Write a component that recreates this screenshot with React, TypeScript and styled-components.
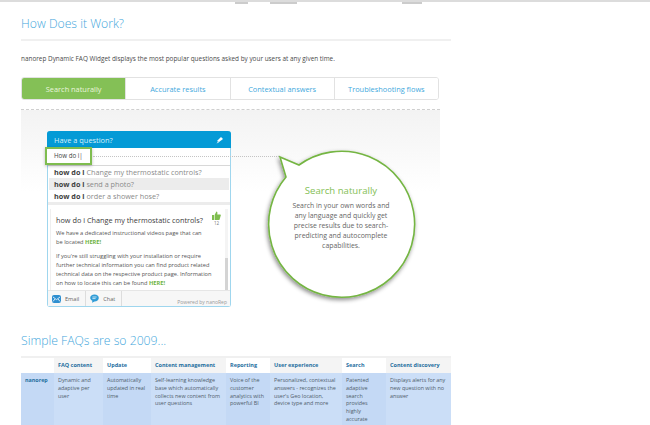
import React from "react";
import styled, { createGlobalStyle } from "styled-components";

const GlobalStyle = createGlobalStyle`
  html, body {
    margin: 0;
    padding: 0;
    background: #ffffff;
  }
  body {
    font-family: "Open Sans", "Liberation Sans", sans-serif;
  }
`;

const Page = styled.div`
  width: 650px;
  height: 425px;
  overflow: hidden;
  display: flex;
  flex-direction: column;
`;

const TopStrip = styled.div`
  height: 2px;
  background: #dcdcdc;
  flex-shrink: 0;
`;

const CutOffRow = styled.div`
  height: 2px;
  display: flex;
  flex-shrink: 0;
  padding-left: 235px;
`;

const CutOffMark = styled.span<{ $w: number; $gap: number }>`
  width: ${({ $w }) => $w}px;
  margin-right: ${({ $gap }) => $gap}px;
  height: 2px;
  background: #cccccc;
`;

const Column = styled.div`
  width: 430px;
  margin-left: 21px;
  display: flex;
  flex-direction: column;
`;

const Heading = styled.h2`
  margin: 8px 0 0;
  height: 23px;
  font-size: 12.2px;
  line-height: 23px;
  font-weight: 300;
  color: #44a7dc;
`;

const Rule = styled.div`
  height: 2px;
  margin-top: 4px;
  background: #f0f0f0;
`;

const Intro = styled.p`
  margin: 12px 0 0;
  font-size: 6.4px;
  line-height: 12px;
  white-space: nowrap;
  color: #4a4a4a;
`;

const Tabs = styled.div`
  width: 418px;
  height: 23px;
  margin-top: 12px;
  display: flex;
  box-sizing: border-box;
  border: 1px solid #e2e2e2;
  border-radius: 3px;
  overflow: hidden;
`;

const Tab = styled.div<{ $active?: boolean }>`
  flex: 1;
  display: flex;
  align-items: center;
  justify-content: center;
  font-size: 7.4px;
  color: ${({ $active }) => ($active ? "#e9f5dc" : "#3fa9dd")};
  background: ${({ $active }) => ($active ? "#84c056" : "#ffffff")};
  border-left: ${({ $active }) => ($active ? "none" : "1px solid #e2e2e2")};
  &:first-child {
    border-left: none;
  }
`;

const Stage = styled.div`
  width: 419px;
  height: 205px;
  margin-top: 9px;
  box-sizing: border-box;
  border-top: 1px dashed #cfcfcf;
  background: linear-gradient(#f3f3f3, #ffffff 82px);
  display: flex;
  align-items: flex-start;
  padding: 21px 0 0 26px;
  position: relative;
`;

const Widget = styled.div`
  width: 184px;
  height: 176px;
  flex-shrink: 0;
  box-sizing: border-box;
  border: 1px solid #9fd6ee;
  border-top: none;
  border-radius: 3px;
  background: #ffffff;
  display: flex;
  flex-direction: column;
  position: relative;
  z-index: 1;
`;

const WidgetHead = styled.div`
  height: 17px;
  margin: 0 -1px;
  padding: 0 7px;
  background: #049ad6;
  border-radius: 3px 3px 0 0;
  display: flex;
  align-items: center;
  justify-content: space-between;
  font-size: 7.4px;
  color: #d8f0fa;
`;

const InputRow = styled.div`
  height: 17px;
  border-bottom: 1px solid #d8d8d8;
  flex-shrink: 0;
`;

const InputFocus = styled.div`
  position: absolute;
  left: -3px;
  top: 16px;
  width: 47px;
  height: 18px;
  box-sizing: border-box;
  border: 2px solid #7fbd4f;
  background: #ffffff;
  box-shadow: 0 1px 3px rgba(0, 0, 0, 0.25);
  font-size: 6.2px;
  line-height: 14px;
  padding-left: 7px;
  color: #444444;
`;

const Suggestions = styled.div`
  padding: 0 1px;
  border-bottom: 3px solid #ececec;
`;

const Suggestion = styled.div<{ $on?: boolean }>`
  height: 12px;
  line-height: 12px;
  padding-left: 5px;
  font-size: 7.25px;
  white-space: nowrap;
  color: #8a8a8a;
  background: ${({ $on }) => ($on ? "#ececec" : "transparent")};
  b {
    color: #3e3e3e;
  }
`;

const Answer = styled.div`
  flex: 1;
  min-height: 0;
  margin: 4px 2px 0;
  padding: 5px 0 0 5px;
  box-sizing: border-box;
  border-left: 1px solid #efefef;
  border-right: 3px solid #f4f4f4;
  position: relative;
`;

const ScrollThumb = styled.div`
  position: absolute;
  right: -3px;
  bottom: 0;
  width: 3px;
  height: 32px;
  background: #d4d4d4;
`;

const AnswerTitle = styled.div`
  font-size: 7.3px;
  line-height: 12px;
  color: #3c3c3c;
  white-space: nowrap;
`;

const Votes = styled.div`
  position: absolute;
  right: 4px;
  top: 2px;
  display: flex;
  flex-direction: column;
  align-items: center;
  font-size: 4.5px;
  line-height: 6px;
  color: #777777;
`;

const AnswerText = styled.p`
  margin: 3px 0 6px;
  width: 163px;
  font-size: 5.7px;
  line-height: 8.7px;
  color: #555555;
  b {
    color: #6db33f;
  }
`;

const WidgetFoot = styled.div`
  height: 15px;
  flex-shrink: 0;
  border-top: 1px solid #e6e6e6;
  background: #f7f7f7;
  display: flex;
  align-items: stretch;
`;

const FootButton = styled.div`
  display: flex;
  align-items: center;
  gap: 4px;
  padding: 0 6px 0 4px;
  font-size: 5.6px;
  color: #666666;
  border-right: 1px solid #dddddd;
`;

const Powered = styled.div`
  margin-left: auto;
  align-self: flex-end;
  padding: 0 3px 1px 0;
  font-size: 5px;
  color: #999999;
`;

const Leader = styled.div`
  position: absolute;
  left: 72px;
  top: 46px;
  width: 186px;
  border-top: 1px dotted #c4c4c4;
  z-index: 2;
`;

const Bubble = styled.div`
  position: absolute;
  left: 259px;
  top: 47px;
  width: 136px;
  height: 138px;
  z-index: 3;
`;

const BubbleArt = styled.svg`
  position: absolute;
  left: 0;
  top: 0;
  overflow: visible;
`;

const BubbleCopy = styled.div`
  position: absolute;
  left: 9px;
  top: 27px;
  width: 104px;
  text-align: center;
`;

const BubbleTitle = styled.div`
  font-size: 9.6px;
  line-height: 14px;
  color: #84c056;
`;

const BubbleText = styled.div`
  margin-top: 3px;
  font-size: 6.9px;
  line-height: 10px;
  color: #666666;
`;

const SectionTitle = styled.h2`
  margin: 15px 0 0;
  height: 23px;
  font-size: 12.2px;
  line-height: 23px;
  font-weight: 300;
  color: #44a7dc;
`;

const Table = styled.div`
  margin-top: 4px;
  border-top: 2px solid #f0f0f0;
  display: grid;
  grid-template-columns: 33px 49px 48px 75px 44px 72px 44px 65px;
`;

const HeadCell = styled.div<{ $shade?: boolean }>`
  height: 15px;
  padding-left: 4px;
  font-size: 5.5px;
  font-weight: 700;
  line-height: 15px;
  white-space: nowrap;
  color: #1f6f9f;
  background: ${({ $shade }) => ($shade ? "#f4f4f4" : "#ffffff")};
`;

const BodyCell = styled.div<{ $shade?: boolean }>`
  height: 60px;
  padding: 4px 3px 0 4px;
  font-size: 5.4px;
  line-height: 7.8px;
  color: #4f5d6b;
  background: ${({ $shade }) => ($shade ? "#cbdef7" : "#c4d9f5")};
  b {
    color: #1f6f9f;
  }
`;

const tabs = ["Search naturally", "Accurate results", "Contextual answers", "Troubleshooting flows"];

const columns = [
  { head: "", body: <b>nanorep</b> },
  { head: "FAQ content", body: "Dynamic and adaptive per user" },
  { head: "Update", body: "Automatically updated in real time" },
  { head: "Content management", body: "Self-learning knowledge base which automatically collects new content from user questions" },
  { head: "Reporting", body: "Voice of the customer analytics with powerful BI" },
  { head: "User experience", body: "Personalized, contextual answers - recognizes the user's Geo location, device type and more" },
  { head: "Search", body: "Patented adaptive search provides highly accurate" },
  { head: "Content discovery", body: "Displays alerts for any new question with no answer" },
];

const App = () => (
  <Page>
    <GlobalStyle />
    <TopStrip />
    <CutOffRow>
      <CutOffMark $w={13} $gap={22} />
      <CutOffMark $w={27} $gap={105} />
      <CutOffMark $w={20} $gap={0} />
    </CutOffRow>
    <Column>
      <Heading>How Does it Work?</Heading>
      <Rule />
      <Intro>nanorep Dynamic FAQ Widget displays the most popular questions asked by your users at any given time.</Intro>
      <Tabs>
        {tabs.map((t, i) => (
          <Tab key={t} $active={i === 0}>{t}</Tab>
        ))}
      </Tabs>
      <Stage>
        <Leader />
        <Widget>
          <WidgetHead>
            Have a question?
            <svg width="8" height="8" viewBox="0 0 8 8">
              <path d="M1 5 L5 1 L7 3 L3 6 Z" fill="#ffffff" />
              <path d="M0.5 7.5 L2 5.5 L3 6.5 Z" fill="#cfeaf6" />
            </svg>
          </WidgetHead>
          <InputRow />
          <InputFocus>How do i|</InputFocus>
          <Suggestions>
            <Suggestion><b>how do i</b> Change my thermostatic controls?</Suggestion>
            <Suggestion $on><b>how do i</b> send a photo?</Suggestion>
            <Suggestion><b>how do i</b> order a shower hose?</Suggestion>
          </Suggestions>
          <Answer>
            <AnswerTitle>how do i Change my thermostatic controls?</AnswerTitle>
            <Votes>
              <svg width="9" height="9" viewBox="0 0 9 9">
                <path d="M0 4 H2 V9 H0 Z M2.6 4 L4.4 0.4 C5.4 0.4 5.6 1.4 5.3 3.4 H8.2 C9 3.4 9 4.4 8.6 5 L7.6 8.4 C7.5 8.8 7.2 9 6.8 9 H2.6 Z" fill="#7fbd4f" />
              </svg>
              12
            </Votes>
            <AnswerText>
              We have a dedicated instructional videos page that can<br />be located <b>HERE!</b>
            </AnswerText>
            <AnswerText>
              If you're still struggling with your installation or require<br />further technical information you can find product related<br />technical data on the respective product page. Information<br />on how to locate this can be found <b>HERE!</b>
            </AnswerText>
            <ScrollThumb />
          </Answer>
          <WidgetFoot>
            <FootButton>
              <svg width="9" height="8" viewBox="0 0 9 8">
                <rect width="9" height="8" rx="2" fill="#2f8fd0" />
                <path d="M1 2 L4.5 4.6 L8 2 M1 6.4 L3 4 M8 6.4 L6 4" stroke="#ffffff" strokeWidth="0.8" fill="none" />
              </svg>
              Email
            </FootButton>
            <FootButton>
              <svg width="9" height="9" viewBox="0 0 9 9">
                <path d="M4.5 0.5 C7 0.5 8.8 2 8.8 4 C8.8 6 7 7.4 4.5 7.4 L2 8.8 L2.4 6.8 C1 6.2 0.2 5.2 0.2 4 C0.2 2 2 0.5 4.5 0.5 Z" fill="#2f9bd6" />
                <path d="M2.4 3 H6.6 M2.4 4.6 H5.6" stroke="#ffffff" strokeWidth="0.7" />
              </svg>
              Chat
            </FootButton>
            <Powered>Powered by nanoRep</Powered>
          </WidgetFoot>
        </Widget>
        <Bubble>
          <BubbleArt width="136" height="138" viewBox="0 0 136 138">
            <defs>
              <filter id="bubbleShadow" x="-20%" y="-20%" width="140%" height="140%">
                <feDropShadow dx="-1" dy="2" stdDeviation="2" floodColor="#000000" floodOpacity="0.45" />
              </filter>
            </defs>
            <path
              d="M0 0 L19 8 A73 73 0 1 1 6 20 Z"
              fill="#ffffff"
              stroke="#74b543"
              strokeWidth="1.6"
              filter="url(#bubbleShadow)"
            />
          </BubbleArt>
          <BubbleCopy>
            <BubbleTitle>Search naturally</BubbleTitle>
            <BubbleText>Search in your own words and any language and quickly get precise results due to search-predicting and autocomplete capabilities.</BubbleText>
          </BubbleCopy>
        </Bubble>
      </Stage>
      <SectionTitle>Simple FAQs are so 2009...</SectionTitle>
      <Table>
        {columns.map((c, i) => (
          <HeadCell key={i} $shade={i % 2 === 1}>{c.head}</HeadCell>
        ))}
        {columns.map((c, i) => (
          <BodyCell key={i} $shade={i % 2 === 1}>{c.body}</BodyCell>
        ))}
      </Table>
    </Column>
  </Page>
);

export default App;
